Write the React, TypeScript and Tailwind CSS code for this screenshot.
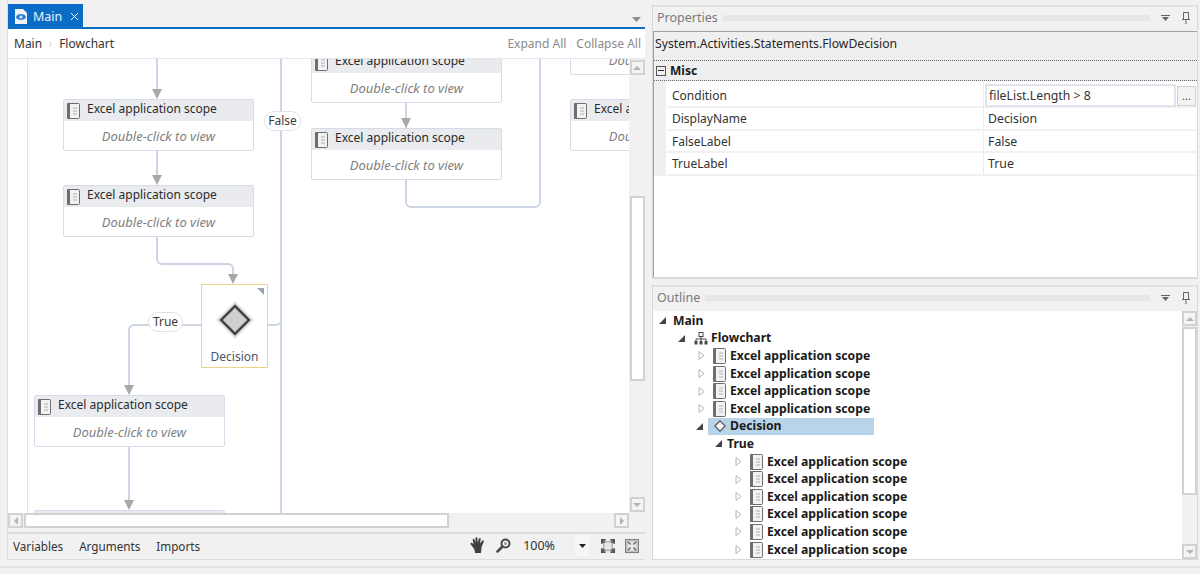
import React from 'react';
import { ChevronRight, X } from 'lucide-react';

const FONT = "font-['Noto_Sans','Open_Sans',sans-serif]";

const ScopeIcon = ({ className = '' }: { className?: string }) => (
  <svg className={className} width="13" height="16" viewBox="0 0 13 16">
    <rect x="0.500" y="0.500" width="12" height="15" rx="1" fill="#f2f2f2" stroke="#6e6e6e" />
    <rect x="0" y="0" width="3" height="16" rx="1" fill="#6e6e6e" />
    <path d="M6 5h4M6 8h4M6 11h4" stroke="#b0b0b0" strokeWidth="1" />
  </svg>
);

// one activity box of the flowchart
const ScopeCard = ({ className }: { className: string }) => (
  <div className={`absolute w-[191px] h-[52px] rounded-[2px] border border-[#d5dbe8] bg-white flex flex-col ${className}`}>
    <div className="h-[21px] bg-[#e9ebee] flex items-center pl-[3px] pb-[3px] gap-[7px] shrink-0">
      <ScopeIcon className="mt-[3px]" />
      <span className="text-[12px] text-[#2b2b2b] whitespace-nowrap">Excel application scope</span>
    </div>
    <div className="flex-1 flex items-center justify-center">
      <span className="text-[13px] italic text-[#7f7f7f] whitespace-nowrap">Double-click to view</span>
    </div>
  </div>
);

const Connectors = () => (
  <svg className="absolute inset-0" width="621" height="454" viewBox="0 0 621 454" fill="none">
    <g stroke="#cdd5e4" strokeWidth="2">
      <path d="M19.500 0V454" stroke="#e0e5ef" strokeWidth="1" />
      <path d="M273 0V454" />
      <path d="M532 0V143a5 5 0 0 1-5 5H403a5 5 0 0 1-5-5V121" />
      <path d="M398 44V69" />
      <path d="M149 0V30M149 92V116" />
      <path d="M149 178V200a5 5 0 0 0 5 5h66a5 5 0 0 1 5 5V216" />
      <path d="M193 266H126a5 5 0 0 0-5 5V328" />
      <path d="M260 266H268a5 5 0 0 0 5-5" />
      <path d="M121 388V442" />
    </g>
    <g fill="#a8a8a8">
      <path d="M144 30h10l-5 10z" />
      <path d="M144 116h10l-5 10z" />
      <path d="M220 215h10l-5 10z" />
      <path d="M393 59h10l-5 10z" />
      <path d="M116 326h10l-5 10z" />
      <path d="M116 441h10l-5 10z" />
    </g>
  </svg>
);

const EdgeLabel = ({ text, className }: { text: string; className: string }) => (
  <div className={`absolute h-[20px] rounded-full border border-[#dfe3ea] bg-white flex items-center justify-center text-[12px] text-[#3c3c3c] ${className}`}>
    {text}
  </div>
);

const DecisionNode = () => (
  <div className="absolute left-[193px] top-[225px] w-[67px] h-[84px] border border-[#ecd48f] bg-white flex flex-col items-center">
    <div className="absolute right-[3px] top-[3px] w-0 h-0 border-t-[7px] border-l-[7px] border-t-[#9aa5b8] border-l-transparent" />
    <svg className="mt-[16px] shrink-0" width="38" height="38" viewBox="0 0 38 38">
      <path d="M19 0L38 19L19 38L0 19Z" fill="#e2e2e2" />
      <path d="M19 5L33 19L19 33L5 19Z" fill="#cfcfcf" stroke="#454545" strokeWidth="2.500" />
    </svg>
    <span className="mt-[10px] text-[12px] text-[#4a5568]">Decision</span>
  </div>
);

const Tri = ({ dir }: { dir: 'up' | 'down' | 'left' | 'right' }) => {
  const d = { up: 'M1 7L5 3L9 7Z', down: 'M1 3L5 7L9 3Z', left: 'M7 1L3 5L7 9Z', right: 'M3 1L7 5L3 9Z' }[dir];
  return (
    <svg width="10" height="10" viewBox="0 0 10 10">
      <path d={d} fill="#b4b4b4" />
    </svg>
  );
};

const ScrollBtn = ({ dir }: { dir: 'up' | 'down' | 'left' | 'right' }) => (
  <div className="w-[15px] h-[15px] shrink-0 border-2 border-[#d2d2d2] bg-[#f4f4f4] flex items-center justify-center">
    <Tri dir={dir} />
  </div>
);

const PanelTitle = ({ title }: { title: string }) => (
  <div className="h-[26px] shrink-0 flex items-center pl-[4px] pr-[7px] pb-[2px] border-t-2 border-[#e2e2e2] gap-[5px]">
    <span className="text-[12.5px] text-[#7a7a7a]">{title}</span>
    <div className="flex-1 h-[6px] bg-[conic-gradient(#dcdcdc_25%,transparent_0_50%,#dcdcdc_0_75%,transparent_0)] bg-[length:2px_2px]" />
    <svg className="ml-[6px]" width="9" height="6" viewBox="0 0 9 6">
      <path d="M0 0h9v1H0zM1 2h7L4.500 6z" fill="#666" />
    </svg>
    <svg className="ml-[7px]" width="8" height="12" viewBox="0 0 8 12">
      <path d="M1.500 0.500h5V7.500h-5zM0 7.500h8M4 8v4" stroke="#666" fill="#eee" strokeWidth="1" />
    </svg>
  </div>
);

const HandIcon = () => (
  <svg width="16" height="17" viewBox="0 0 16 17">
    <path d="M3.500 11L0.800 7.500C0 6.500 1.200 5.300 2.200 6.100L3.600 7.300L2.700 2.800C2.500 1.500 4.200 1.200 4.500 2.500L5.500 5.800L5.500 1.300C5.500 0 7.400 0 7.400 1.300L7.800 5.800L8.900 1.800C9.200 0.600 11 1 10.700 2.300L10 6.500L12.300 3.700C13.100 2.800 14.500 3.800 13.700 4.900L11.700 9.500C11.200 13 11.200 13.500 11 16H5C5 14 4.600 12.500 3.500 11Z" fill="#3f3f3f" />
  </svg>
);

const ZoomIcon = () => (
  <svg width="15" height="15" viewBox="0 0 15 15" fill="none">
    <circle cx="9.500" cy="5.500" r="4" stroke="#484848" strokeWidth="2" />
    <circle cx="9.500" cy="5.500" r="1.500" fill="#9a9a9a" />
    <path d="M6.500 8.500L1.500 13.500" stroke="#484848" strokeWidth="2.500" strokeLinecap="round" />
  </svg>
);

const FitIcon = () => (
  <svg width="14" height="14" viewBox="0 0 15 15" fill="none">
    <rect x="3" y="3" width="9" height="9" fill="#e8e8e8" stroke="#8a8a8a" />
    <path d="M1 5V1H5M10 1H14V5M14 10V14H10M5 14H1V10" stroke="#555" strokeWidth="2" />
    <path d="M1 1L4 4M14 1L11 4M14 14L11 11M1 14L4 11" stroke="#555" strokeWidth="1.500" />
  </svg>
);

const OverviewIcon = () => (
  <svg width="14" height="14" viewBox="0 0 15 15" fill="none">
    <rect x="0.500" y="0.500" width="14" height="14" fill="#c4c4c4" stroke="#777" />
    <rect x="3" y="3" width="9" height="9" fill="#ebebeb" />
    <path d="M3 3L6 6M12 3L9 6M12 12L9 9M3 12L6 9" stroke="#666" strokeWidth="1.500" />
  </svg>
);

const Caret = ({ open }: { open: boolean }) =>
  open ? (
    <svg width="7" height="7" viewBox="0 0 7 7" className="shrink-0">
      <path d="M7 0V7H0Z" fill="#444" />
    </svg>
  ) : (
    <svg width="7" height="9" viewBox="0 0 7 9" className="shrink-0">
      <path d="M1 0.500L6 4.500L1 8.500Z" fill="#fff" stroke="#b4b4b4" />
    </svg>
  );

const TreeScope = ({ indent }: { indent: string }) => (
  <div className={`h-[17.6px] flex items-center ${indent}`}>
    <Caret open={false} />
    <ScopeIcon className="ml-[8px] mr-[4px]" />
    <span className="text-[12.2px] font-bold text-[#1a1a1a] whitespace-nowrap">Excel application scope</span>
  </div>
);

const propRows = [
  { name: 'DisplayName', value: 'Decision', height: 'h-[23px]' },
  { name: 'FalseLabel', value: 'False', height: 'h-[22px] pt-[1px]' },
  { name: 'TrueLabel', value: 'True', height: 'h-[23px]' }
];

export default function App() {
  return (
    <div className={`w-[1200px] h-[574px] bg-[#f1f1f1] overflow-hidden flex flex-col leading-[16px] ${FONT}`}>
      <div className="h-[568px] shrink-0 flex pl-[7px] pr-[3px] gap-[7px] border-b-2 border-[#e4e4e4]">
        {/* designer */}
        <div className="w-[638px] shrink-0 flex flex-col h-[560px] border-l border-b border-[#dcdcdc]">
          <div className="h-[27px] shrink-0 flex items-end justify-between pr-[4px]">
            <div className="w-[75px] h-[23px] bg-[#0a6cc4] flex items-center pl-[7px] pt-[2px]">
              <svg width="12" height="15" viewBox="0 0 12 15">
                <path d="M0 0H8L12 4V15H0Z" fill="#eef3fa" />
                <ellipse cx="6" cy="8" rx="5" ry="3" fill="#2f7ed8" />
                <circle cx="6" cy="8" r="1.500" fill="#dbe9f8" />
              </svg>
              <span className="ml-[6px] text-[12.5px] text-[#e8f2fb]">Main</span>
              <X className="ml-[6px] text-white" size={13} strokeWidth={1.800} />
            </div>
            <svg className="mb-[5px]" width="9" height="5" viewBox="0 0 9 5">
              <path d="M0 0h9L4.500 5z" fill="#8f8f8f" />
            </svg>
          </div>
          <div className="h-[2px] shrink-0 bg-[#0a6cc4]" />
          <div className="h-[30px] shrink-0 bg-white border-b border-[#e3e7ef] flex items-center pl-[6px] pr-[4px] pt-[1px]">
            <span className="text-[12px] text-[#333]">Main</span>
            <ChevronRight className="mx-[4px] text-[#b5b5b5]" size={9} />
            <span className="text-[12px] text-[#333]">Flowchart</span>
            <div className="flex-1" />
            <span className="text-[12px] text-[#8a8a8a]">Expand All</span>
            <span className="ml-[10px] text-[12px] text-[#8a8a8a]">Collapse All</span>
          </div>
          <div className="h-[473px] shrink-0 flex flex-col">
            <div className="flex h-[454px]">
              <div className="relative w-[621px] h-[454px] overflow-hidden bg-white">
                <Connectors />
                <ScopeCard className="left-[55px] top-[40px]" />
                <ScopeCard className="left-[55px] top-[126px]" />
                <ScopeCard className="left-[303px] top-[-8px]" />
                <ScopeCard className="left-[303px] top-[69px]" />
                <ScopeCard className="left-[562px] top-[-36px]" />
                <ScopeCard className="left-[562px] top-[40px]" />
                <ScopeCard className="left-[26px] top-[336px]" />
                <ScopeCard className="left-[26px] top-[451px]" />
                <DecisionNode />
                <EdgeLabel text="False" className="left-[256px] top-[52px] w-[37px]" />
                <EdgeLabel text="True" className="left-[140px] top-[253px] w-[35px]" />
              </div>
              <div className="w-[16px] flex flex-col items-center pt-[1px] pb-[1px] bg-[#f1f1f1]">
                <ScrollBtn dir="up" />
                <div className="flex-1 pt-[121px] pb-[116px] flex w-full justify-center">
                  <div className="w-[15px] h-full border-2 border-[#d2d2d2] bg-white" />
                </div>
                <ScrollBtn dir="down" />
              </div>
            </div>
            <div className="h-[16px] flex bg-[#f1f1f1] pr-[16px]">
              <ScrollBtn dir="left" />
              <div className="w-[425px] h-[15px] ml-[1px] border-2 border-[#d2d2d2] bg-white" />
              <div className="flex-1" />
              <ScrollBtn dir="right" />
            </div>
          </div>
          <div className="flex-1 border-t-2 border-[#dcdcdc] flex items-center pl-[5px] pr-[6px] pb-[2px]">
            <span className="text-[11.7px] text-[#333]">Variables</span>
            <span className="ml-[16px] text-[11.7px] text-[#333]">Arguments</span>
            <span className="ml-[16px] text-[11.7px] text-[#333]">Imports</span>
            <div className="flex-1" />
            <HandIcon />
            <div className="ml-[10px]"><ZoomIcon /></div>
            <span className="ml-[12px] text-[12.5px] text-[#333]">100%</span>
            <div className="ml-[20px] w-[14px] h-[21px] rounded-[2px] bg-[#f6f6f6] flex items-center justify-center">
              <svg width="7" height="4" viewBox="0 0 7 4">
                <path d="M0 0h7L3.500 4z" fill="#222" />
              </svg>
            </div>
            <div className="ml-[12px]"><FitIcon /></div>
            <div className="ml-[10px]"><OverviewIcon /></div>
          </div>
        </div>

        {/* right column */}
        <div className="flex-1 flex flex-col pt-[5px] h-[560px]">
          <div className="h-[274px] shrink-0 flex flex-col border-x border-b-2 border-[#d9d9d9]">
            <PanelTitle title="Properties" />
            <div className="flex-1 flex flex-col bg-white border-l border-t border-[#a0a0a0]">
              <div className="h-[28px] shrink-0 bg-[#efefef] flex items-center pl-[1px] pb-[4px] text-[12.2px] text-[#262626]">
                System.Activities.Statements.FlowDecision
              </div>
              <div className="h-[21px] shrink-0 bg-[#efefef] border-y border-dotted border-[#666] flex items-center pl-[2px]">
                <div className="w-[10px] h-[10px] border border-[#555] flex items-center justify-center">
                  <div className="w-[6px] h-px bg-[#333]" />
                </div>
                <span className="ml-[4px] text-[12px] font-bold text-[#1a1a1a]">Misc</span>
              </div>
              <div className="flex">
                <div className="w-[12px] h-[95px] shrink-0 bg-[#efefef]" />
                <div className="flex-1 flex flex-col pl-[1px]">
                  <div className="h-[27px] flex border-b-2 border-[#f1f1f1]">
                    <div className="w-[317px] shrink-0 pl-[5px] pt-[5px] flex items-center border-r border-[#ececec] text-[12px] text-[#333]">Condition</div>
                    <div className="flex-1 flex items-start pt-[3px] pl-[1px] pr-[1px] gap-[1px]">
                      <div className="w-[191px] h-[23px] shrink-0 border-2 border-[#dfe5ef] bg-white flex items-center pl-[2px] text-[12.3px] text-[#333]">fileList.Length &gt; 8</div>
                      <div className="w-[19px] h-[20px] mt-[2px] border border-[#cfcfcf] bg-[#f3f3f3] flex items-center justify-center text-[11px] text-[#444]">...</div>
                    </div>
                  </div>
                  {propRows.map((row) => (
                    <div key={row.name} className={`flex border-b-2 border-[#f1f1f1] ${row.height}`}>
                      <div className="w-[317px] shrink-0 pl-[5px] flex items-center border-r border-[#ececec] text-[12px] text-[#333]">{row.name}</div>
                      <div className="flex-1 pl-[4px] flex items-center text-[12.3px] text-[#333]">{row.value}</div>
                    </div>
                  ))}
                </div>
              </div>
            </div>
          </div>
          <div className="h-[6px] shrink-0" />
          <div className="h-[275px] shrink-0 flex flex-col border-x border-b border-[#d9d9d9]">
            <PanelTitle title="Outline" />
            <div className="flex-1 flex min-h-0 bg-white">
              <div className="flex-1 overflow-hidden pt-[1px]">
                <div className="h-[17.6px] flex items-center pl-[6px]">
                  <Caret open />
                  <span className="ml-[7px] text-[12.2px] font-bold text-[#1a1a1a]">Main</span>
                </div>
                <div className="h-[17.6px] flex items-center pl-[25px]">
                  <Caret open />
                  <svg className="ml-[9px] mr-[3px]" width="14" height="13" viewBox="0 0 14 13" fill="none">
                    <rect x="5" y="0.500" width="4" height="4" stroke="#4a4a4a" />
                    <path d="M7 4.500V7M2 9V7H12V9M7 7V9" stroke="#4a4a4a" />
                    <rect x="0.500" y="9" width="3" height="3.500" fill="#4a4a4a" />
                    <rect x="5.500" y="9" width="3" height="3.500" fill="#4a4a4a" />
                    <rect x="10.500" y="9" width="3" height="3.500" fill="#4a4a4a" />
                  </svg>
                  <span className="text-[12.2px] font-bold text-[#1a1a1a]">Flowchart</span>
                </div>
                <TreeScope indent="pl-[45px]" />
                <TreeScope indent="pl-[45px]" />
                <TreeScope indent="pl-[45px]" />
                <TreeScope indent="pl-[45px]" />
                <div className="h-[17.6px] flex items-center pl-[43px]">
                  <Caret open />
                  <div className="ml-[5px] w-[166px] h-full bg-[#b9d3e8] flex items-center pl-[6px]">
                    <svg width="12" height="12" viewBox="0 0 12 12" fill="none">
                      <path d="M6 0.800L11.200 6L6 11.200L0.800 6Z" stroke="#555" strokeWidth="1.200" fill="#f4f4f4" />
                    </svg>
                    <span className="ml-[4px] text-[12.2px] font-bold text-[#1a1a1a]">Decision</span>
                  </div>
                </div>
                <div className="h-[17.6px] flex items-center pl-[62px]">
                  <Caret open />
                  <span className="ml-[5px] text-[12.2px] font-bold text-[#1a1a1a]">True</span>
                </div>
                <TreeScope indent="pl-[82px]" />
                <TreeScope indent="pl-[82px]" />
                <TreeScope indent="pl-[82px]" />
                <TreeScope indent="pl-[82px]" />
                <TreeScope indent="pl-[82px]" />
                <TreeScope indent="pl-[82px]" />
              </div>
              <div className="w-[15px] shrink-0 bg-[#f1f1f1] flex flex-col">
                <ScrollBtn dir="up" />
                <div className="flex-1 pt-[1px] pb-[49px]">
                  <div className="w-[15px] h-full border-2 border-[#d2d2d2] bg-white" />
                </div>
                <ScrollBtn dir="down" />
              </div>
            </div>
          </div>
        </div>
      </div>
    </div>
  );
}
